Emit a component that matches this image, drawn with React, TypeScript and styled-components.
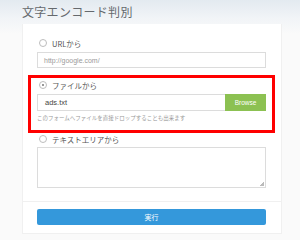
import styled, { createGlobalStyle } from 'styled-components';

const GlobalStyle = createGlobalStyle`
  html, body {
    margin: 0;
    padding: 0;
  }
  body {
    width: 300px;
    height: 240px;
    overflow: hidden;
    font-family: 'Noto Sans CJK JP', 'Liberation Sans', sans-serif;
    background: linear-gradient(to bottom, #e3eaf0 0px, #f1f4f7 18px, #fafafa 34px, #fafafa 100%);
  }
`;

const Page = styled.div`
  padding: 0 18px 0 22px;
  display: flex;
  flex-direction: column;
`;

const Title = styled.h1`
  margin: 0;
  height: 24px;
  line-height: 24px;
  font-size: 12px;
  font-weight: 400;
  letter-spacing: 0.3px;
  color: #65696d;
  font-family: 'Noto Sans CJK JP', serif;
`;

const Card = styled.div`
  background: #fff;
  border: 1px solid #f0f0f0;
  border-top: none;
  display: flex;
  flex-direction: column;
`;

const Body = styled.div`
  padding: 12px 15px 13px 14px;
  display: flex;
  flex-direction: column;
`;

const Highlight = styled.div`
  margin: 7px -9px 0;
  padding: 0 6px 7px;
  border: 3px solid #ff0000;
  display: flex;
  flex-direction: column;
`;

const RadioRow = styled.label<{ $h?: number }>`
  height: ${(p) => p.$h ?? 14}px;
  display: flex;
  align-items: center;
  gap: 5px;
  padding-left: 2px;
  font-size: 7.5px;
  color: #555;
`;

const Radio = styled.span<{ $checked?: boolean }>`
  width: 6px;
  height: 6px;
  border: 1px solid #bdbdbd;
  border-radius: 50%;
  display: flex;
  align-items: center;
  justify-content: center;
  &::after {
    content: '';
    width: 2px;
    height: 2px;
    border-radius: 50%;
    background: ${(p) => (p.$checked ? '#777' : 'transparent')};
  }
`;

const Field = styled.div<{ $h: number }>`
  margin-top: 2px;
  height: ${(p) => p.$h}px;
  box-sizing: border-box;
  border: 1px solid #dcdcdc;
  background: #fff;
  display: flex;
  align-items: center;
  padding-left: 6px;
  font-family: 'Liberation Sans', sans-serif;
  font-size: 7px;
  color: #9a9a9a;
`;

const FileRow = styled.div`
  margin-top: 2px;
  height: 17px;
  display: flex;
`;

const FileName = styled.div`
  flex: 1;
  box-sizing: border-box;
  border: 1px solid #dcdcdc;
  border-right: none;
  display: flex;
  align-items: center;
  padding-left: 7px;
  font-family: 'Liberation Sans', sans-serif;
  font-size: 7.5px;
  color: #444;
`;

const BrowseButton = styled.div`
  width: 41px;
  background: #8cc152;
  color: #fff;
  display: flex;
  align-items: center;
  justify-content: center;
  font-family: 'Liberation Sans', sans-serif;
  font-size: 6.5px;
`;

const Hint = styled.div`
  margin-top: 2px;
  height: 10px;
  line-height: 10px;
  font-size: 5.5px;
  color: #999;
`;

const TextArea = styled.div`
  margin-top: 2px;
  height: 41px;
  box-sizing: border-box;
  border: 1px solid #dcdcdc;
  position: relative;
  &::after {
    content: '';
    position: absolute;
    right: 1px;
    bottom: 1px;
    width: 4px;
    height: 4px;
    background: linear-gradient(135deg, transparent 50%, #bbb 50%);
  }
`;

const Footer = styled.div`
  border-top: 1px solid #f0f0f0;
  padding: 7px 15px 8px 14px;
`;

const SubmitButton = styled.div`
  height: 16px;
  border-radius: 2px;
  background: #3498db;
  color: #fff;
  display: flex;
  align-items: center;
  justify-content: center;
  font-size: 7px;
`;

export default function App() {
  return (
    <>
      <GlobalStyle />
      <Page>
        <Title>文字エンコード判別</Title>
        <Card>
          <Body>
            <RadioRow>
              <Radio />
              URLから
            </RadioRow>
            <Field $h={16}>http://google.com/</Field>
            <Highlight>
              <RadioRow>
                <Radio $checked />
                ファイルから
              </RadioRow>
              <FileRow>
                <FileName>ads.txt</FileName>
                <BrowseButton>Browse</BrowseButton>
              </FileRow>
              <Hint>このフォームへファイルを直接ドロップすることも出来ます</Hint>
            </Highlight>
            <RadioRow $h={12}>
              <Radio />
              テキストエリアから
            </RadioRow>
            <TextArea />
          </Body>
          <Footer>
            <SubmitButton>実行</SubmitButton>
          </Footer>
        </Card>
      </Page>
    </>
  );
}
